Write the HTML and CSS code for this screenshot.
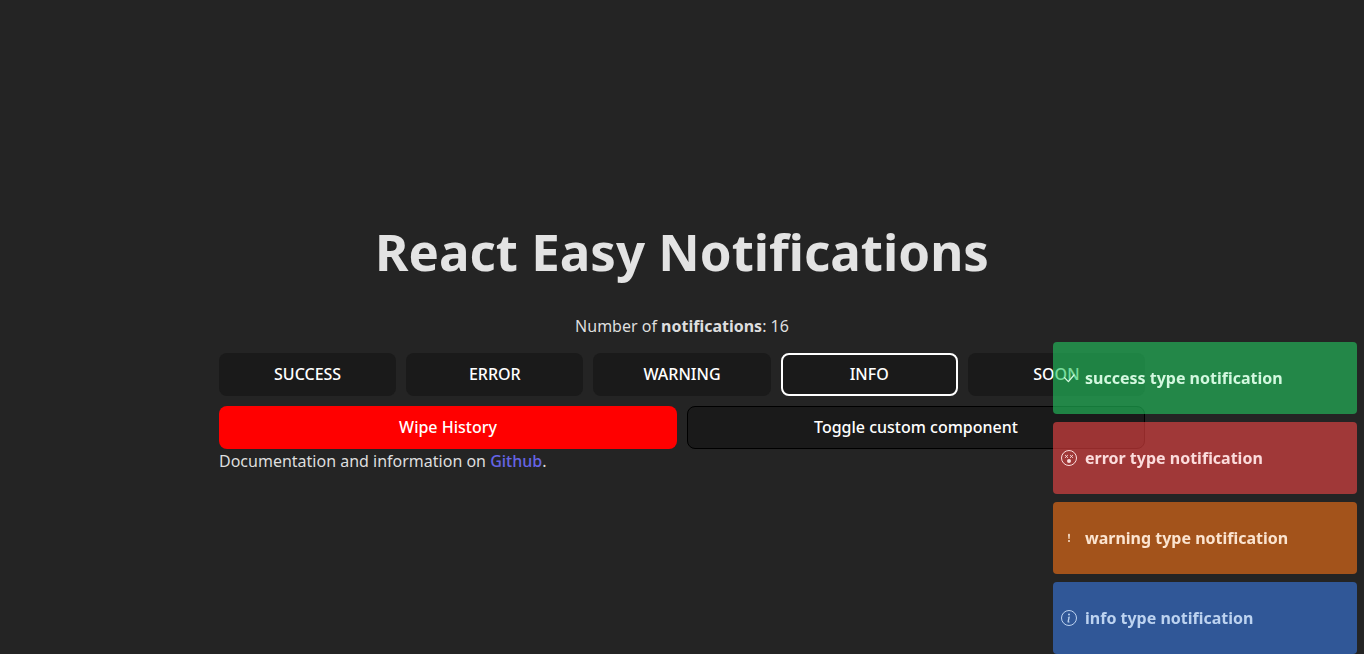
FILE: index.html
```html
<!DOCTYPE html>
<html lang="en">
<head>
<meta charset="utf-8">
<meta name="viewport" content="width=device-width, initial-scale=1">
<title>React Easy Notifications</title>
<link rel="stylesheet" href="styles.css">
</head>
<body>
<main class="app">
  <h1 class="title">React Easy Notifications</h1>
  <p class="count">Number of <b>notifications</b>: 16</p>
  <div class="actions">
    <div class="row">
      <button type="button" class="btn">SUCCESS</button>
      <button type="button" class="btn">ERROR</button>
      <button type="button" class="btn">WARNING</button>
      <button type="button" class="btn btn-active">INFO</button>
      <button type="button" class="btn">SOON</button>
    </div>
    <div class="row">
      <button type="button" class="btn btn-wipe">Wipe History</button>
      <button type="button" class="btn btn-toggle">Toggle custom component</button>
    </div>
  </div>
  <p class="docs">Documentation and information on <a class="link" href="#github">Github</a>.</p>
</main>
<aside class="toasts" aria-label="Notifications">
  <div class="toast toast-success">
    <svg class="icon" viewBox="0 0 16 16" aria-hidden="true"><path d="M3.5 7.6 7.4 11.6 13 5" fill="none" stroke="currentColor" stroke-width="1.3" stroke-linecap="round" stroke-linejoin="round"/></svg>
    <span>success type notification</span>
  </div>
  <div class="toast toast-error">
    <svg class="icon" viewBox="0 0 16 16" aria-hidden="true"><circle cx="8" cy="8" r="7.5" fill="none" stroke="currentColor"/><path d="M4.4 5.3l2.2 2.2m0-2.2l-2.2 2.2M9.4 5.3l2.2 2.2m0-2.2l-2.2 2.2" fill="none" stroke="currentColor" stroke-linecap="round"/><circle cx="8" cy="11" r="2" fill="currentColor"/></svg>
    <span>error type notification</span>
  </div>
  <div class="toast toast-warning">
    <svg class="icon" viewBox="0 0 16 16" aria-hidden="true"><path d="M7.1 4.9a.91.91 0 1 1 1.8 0l-.35 3.6a.55.55 0 0 1-1.1 0z" fill="currentColor"/><circle cx="8" cy="11" r="1" fill="currentColor"/></svg>
    <span>warning type notification</span>
  </div>
  <div class="toast toast-info">
    <svg class="icon" viewBox="0 0 16 16" aria-hidden="true"><circle cx="8" cy="8" r="7.5" fill="none" stroke="currentColor"/><path d="m8.93 6.588-2.29.287-.082.38.45.083c.294.07.352.176.288.469l-.738 3.468c-.194.897.105 1.319.808 1.319.545 0 1.178-.252 1.465-.598l.088-.416c-.2.176-.492.246-.686.246-.275 0-.375-.193-.304-.533zM9 4.5a1 1 0 1 1-2 0 1 1 0 0 1 2 0" fill="currentColor"/></svg>
    <span>info type notification</span>
  </div>
</aside>
</body>
</html>
```
FILE: styles.css
```css
* {
  box-sizing: border-box;
}

body {
  margin: 0;
  min-height: 100vh;
  display: flex;
  align-items: center;
  justify-content: center;
  padding: 8px 16px 0;
  background: #242424;
  color: #dedede;
  font-family: "Noto Sans", sans-serif;
  font-size: 16px;
  line-height: 24px;
}

.app {
  width: 100%;
  max-width: 926px;
}

.title {
  margin: 34px 0 35px;
  font-size: 51px;
  line-height: 56px;
  text-align: center;
  color: #e3e3e3;
}

.count {
  margin: 0 0 15px;
  text-align: center;
}

.actions {
  display: grid;
  gap: 10px;
}

.row {
  display: flex;
  gap: 10px;
}

.btn {
  flex: 1 1 0;
  padding: 8px 16px;
  border: 1px solid transparent;
  border-radius: 8px;
  background: #1a1a1a;
  color: #fff;
  font-family: inherit;
  font-size: 16px;
  font-weight: 500;
  line-height: 25px;
  cursor: pointer;
}

.btn-active {
  padding: 7px 15px;
  border: 2px solid #fff;
}

.btn-wipe {
  background: #f00;
}

.btn-toggle {
  border-color: #000;
}

.docs {
  margin: 0;
}

.link {
  color: #6664e4;
  font-weight: 500;
  text-decoration: none;
}

.toasts {
  position: fixed;
  right: 7px;
  bottom: 0;
  width: 304px;
  display: flex;
  flex-direction: column;
  gap: 8px;
}

.toast {
  display: flex;
  align-items: center;
  gap: 8px;
  padding: 24px 8px;
  border-radius: 4px;
  font-weight: 700;
}

.toast-success {
  background: rgb(34 197 94 / 61%);
  color: #d3f8df;
}

.toast-error {
  background: rgb(239 68 68 / 61%);
  color: #fbdcdc;
}

.toast-warning {
  background: rgb(249 115 22 / 60%);
  color: #fbe4d0;
}

.toast-info {
  background: rgb(59 130 246 / 55%);
  color: #bdd3f0;
}

.icon {
  flex: none;
  width: 16px;
  height: 16px;
}
```
